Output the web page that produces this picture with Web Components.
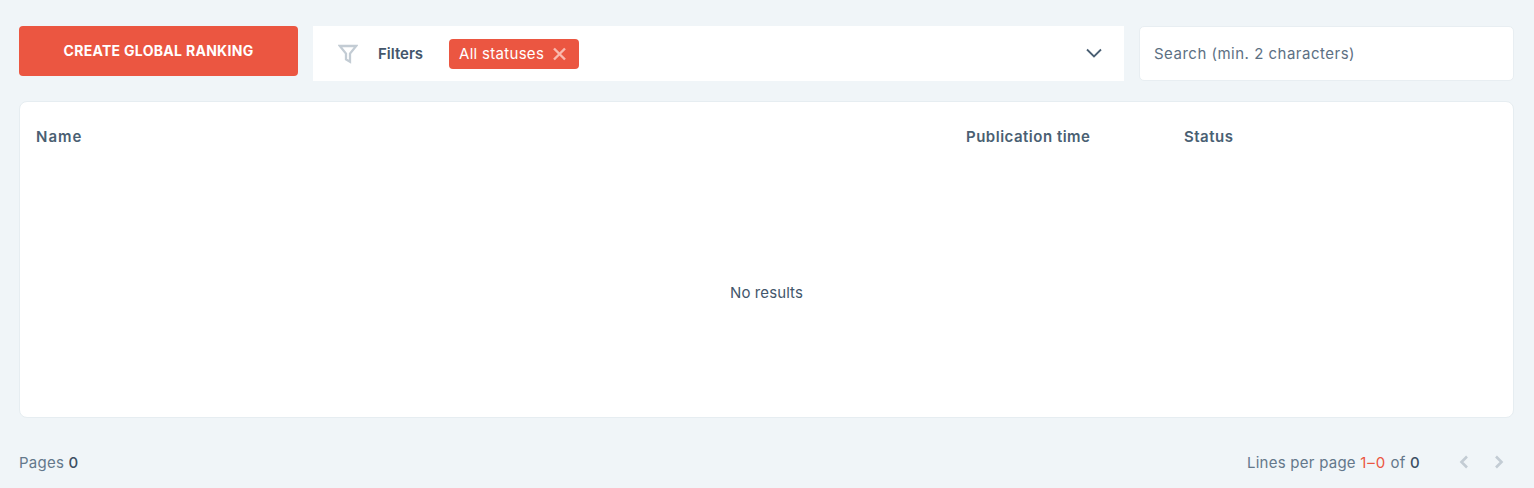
<!DOCTYPE html>
<html>
<head>
<meta charset="utf-8">
<style>
html, body { margin: 0; height: 100%; background: #f0f5f8; }
body { font-family: Inter, "Liberation Sans", sans-serif; color: #4a5f73; overflow: hidden; }
ranking-page { height: 488px; }
</style>
</head>
<body>
<ranking-page></ranking-page>
<script>
class PrimaryButton extends HTMLElement {
    constructor() {
        super();
        this.attachShadow({ mode: "open" });
        this.shadowRoot.innerHTML = `
<style>
:host { display: flex; align-items: center; justify-content: center; box-sizing: border-box; width: 279px; height: 50px; padding-bottom: 2px; background: #eb5641; border-radius: 4px; color: #fff; font-size: 14px; font-weight: 700; letter-spacing: 0.3px; white-space: nowrap; }
</style>
<slot></slot>`;
    }
}
customElements.define("primary-button", PrimaryButton);

class FilterChip extends HTMLElement {
    constructor() {
        super();
        this.attachShadow({ mode: "open" });
        this.shadowRoot.innerHTML = `
<style>
:host { display: inline-flex; align-items: center; box-sizing: border-box; width: 130px; height: 30px; padding: 0 12px 0 10px; justify-content: space-between; background: #eb5641; border-radius: 4px; color: #fff; font-size: 15px; letter-spacing: 0.3px; white-space: nowrap; }
svg { display: block; }
</style>
<slot></slot>
<svg width="15" height="14" viewBox="0 0 15 14"><path d="M2 1.5l11 11M13 1.5l-11 11" stroke="#f9b9ae" stroke-width="2.4" fill="none"/></svg>`;
    }
}
customElements.define("filter-chip", FilterChip);

class FilterBar extends HTMLElement {
    constructor() {
        super();
        this.attachShadow({ mode: "open" });
        this.shadowRoot.innerHTML = `
<style>
:host { display: flex; align-items: center; box-sizing: border-box; flex: 1; height: 55px; padding: 0 21px 0 25px; background: #fff; }
.funnel { display: block; margin-right: 20px; }
.label { width: 71px; font-size: 15px; font-weight: 600; color: #43566b; }
.chips { flex: 1; display: flex; align-items: center; }
.caret { display: block; margin-bottom: 1px; }
</style>
<svg class="funnel" width="20" height="20" viewBox="0 0 20 20"><path d="M1.8 2h16.4l-6.2 7.6v8.2l-4-2.4v-5.8z" fill="none" stroke="#c3ccd4" stroke-width="2.3" stroke-linejoin="miter"/></svg>
<div class="label">Filters</div>
<div class="chips"><slot></slot></div>
<svg class="caret" width="18" height="12" viewBox="0 0 18 12"><path d="M2 2.5l7 7 7-7" fill="none" stroke="#4a5f73" stroke-width="1.8"/></svg>`;
    }
}
customElements.define("filter-bar", FilterBar);

class SearchBox extends HTMLElement {
    constructor() {
        super();
        this.attachShadow({ mode: "open" });
        this.shadowRoot.innerHTML = `
<style>
:host { display: flex; align-items: center; box-sizing: border-box; width: 375px; height: 55px; padding: 0 14px; background: #fff; border: 1px solid #e8eef2; border-radius: 5px; color: #5d7083; font-size: 15px; letter-spacing: 0.5px; }
</style>
<slot></slot>`;
    }
}
customElements.define("search-box", SearchBox);

class ResultsTable extends HTMLElement {
    constructor() {
        super();
        this.attachShadow({ mode: "open" });
        this.shadowRoot.innerHTML = `
<style>
:host { display: flex; flex-direction: column; box-sizing: border-box; height: 317px; background: #fff; border: 1px solid #e6edf1; border-radius: 8px; }
.head { display: grid; grid-template-columns: 930px 218px 1fr; padding: 26px 16px 0; font-size: 15px; font-weight: 600; line-height: 18px; letter-spacing: 0.5px; color: #4a5f73; }
.name { letter-spacing: 1px; }
.empty { flex: 1; display: flex; align-items: center; justify-content: center; padding-top: 22px; font-size: 15px; letter-spacing: 0.1px; color: #43566b; }
</style>
<div class="head"><div class="name">Name</div><div>Publication time</div><div>Status</div></div>
<div class="empty">No results</div>`;
    }
}
customElements.define("results-table", ResultsTable);

class PagerBar extends HTMLElement {
    constructor() {
        super();
        this.attachShadow({ mode: "open" });
        this.shadowRoot.innerHTML = `
<style>
:host { display: flex; align-items: center; justify-content: space-between; height: 20px; font-size: 15px; letter-spacing: 0.25px; color: #64788b; }
b { font-weight: 500; color: #3c4f63; }
.range { color: #eb5641; letter-spacing: 0.9px; }
.right { display: flex; align-items: center; }
.arrows { display: flex; gap: 23px; margin-left: 38px; margin-right: 9px; }
svg { display: block; }
</style>
<div>Pages <b>0</b></div>
<div class="right">
<div>Lines per page <span class="range">1–0</span> of <b>0</b></div>
<div class="arrows">
<svg width="12" height="14" viewBox="0 0 12 14"><path d="M9 1.5L3.5 7 9 12.5" fill="none" stroke="#c3ccd4" stroke-width="2.6"/></svg>
<svg width="12" height="14" viewBox="0 0 12 14"><path d="M3 1.5L8.5 7 3 12.5" fill="none" stroke="#c3ccd4" stroke-width="2.6"/></svg>
</div>
</div>`;
    }
}
customElements.define("pager-bar", PagerBar);

class RankingPage extends HTMLElement {
    constructor() {
        super();
        this.attachShadow({ mode: "open" });
        this.shadowRoot.innerHTML = `
<style>
:host { display: flex; flex-direction: column; box-sizing: border-box; padding: 26px 20px 0 19px; }
.top { display: flex; align-items: flex-start; gap: 15px; margin-bottom: 20px; }
pager-bar { margin-top: 34px; }
</style>
<div class="top">
<primary-button>CREATE GLOBAL RANKING</primary-button>
<filter-bar><filter-chip>All statuses</filter-chip></filter-bar>
<search-box>Search (min. 2 characters)</search-box>
</div>
<results-table></results-table>
<pager-bar></pager-bar>`;
    }
}
customElements.define("ranking-page", RankingPage);
</script>
</body>
</html>
